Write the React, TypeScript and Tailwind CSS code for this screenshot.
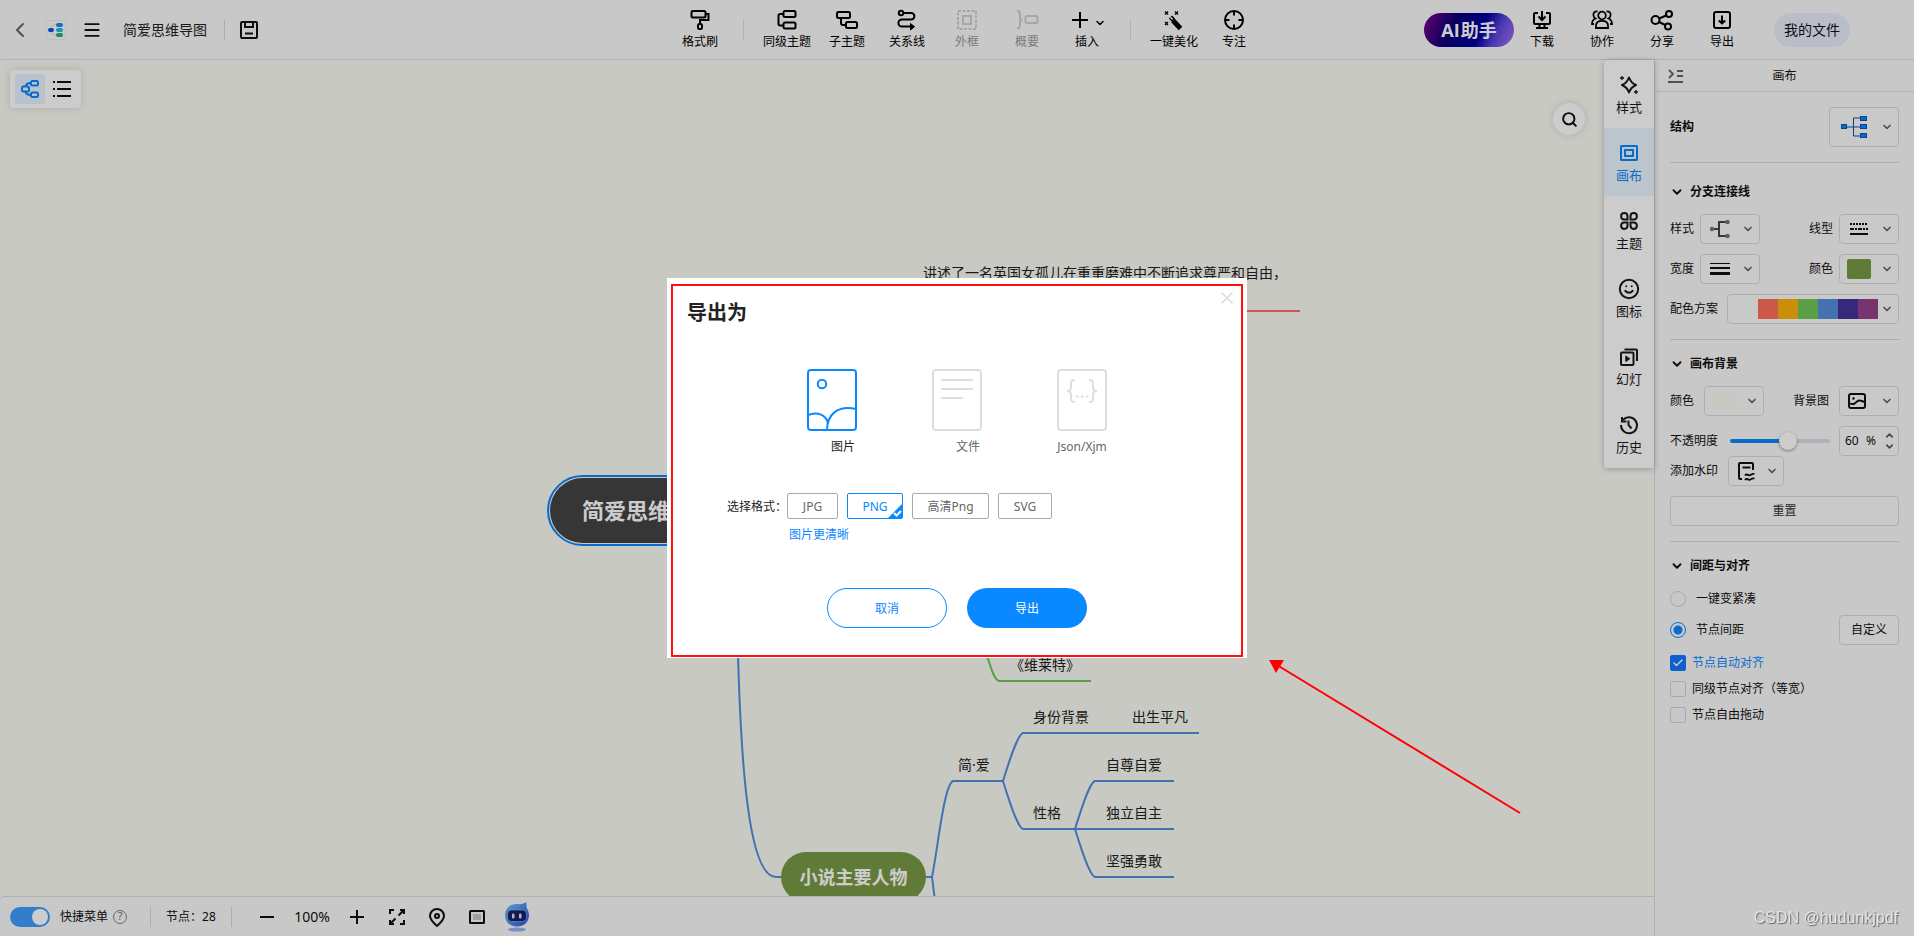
import React, { useState } from 'react';
import { Check, ChevronDown, ChevronLeft, ChevronUp, Menu, Search, Smile, X } from 'lucide-react';

type IconProps = { children: React.ReactNode; size?: number; w?: number; className?: string };

function Svg({ children, size = 20, w = 2, className }: IconProps) {
  return (
    <svg
      width={size}
      height={size}
      viewBox={`0 0 ${size} ${size}`}
      fill="none"
      stroke="currentColor"
      strokeWidth={w}
      className={className}
      overflow="visible"
      aria-hidden="true"
    >
      {children}
    </svg>
  );
}

const icons = {
  brush: (
    <Svg>
      <rect x="1.5" y="1" width="14" height="6.5" rx="1.5" />
      <path d="M15.5 4h3v6h-8.500v4" />
      <rect x="8" y="14" width="4" height="5" rx="1.5" />
    </Svg>
  ),
  sibling: (
    <Svg>
      <rect x="6.500" y="1" width="12" height="6" rx="1.5" />
      <rect x="6.500" y="12.500" width="12" height="6" rx="1.5" />
      <path d="M6.500 4H3a1.500 1.500 0 0 0-1.500 1.500V14A1.500 1.500 0 0 0 3 15.500h3.500" />
    </Svg>
  ),
  child: (
    <Svg>
      <rect x="0" y="2" width="13" height="6" rx="1.5" />
      <rect x="9" y="12" width="11" height="6" rx="1.5" />
      <path d="M4 8v5a2 2 0 0 0 2 2h3" />
    </Svg>
  ),
  relation: (
    <Svg>
      <circle cx="4" cy="3" r="2.200" />
      <path d="M6.200 3h8a3.200 3.200 0 0 1 0 6.400H5a3.600 3.600 0 0 0 0 7.200h9" />
      <path d="M13.500 13.500l4 3.200-4 3.200z" fill="currentColor" strokeWidth="1" />
    </Svg>
  ),
  frame: (
    <Svg>
      <rect x="1" y="1" width="18" height="18" strokeDasharray="3 1.5" />
      <rect x="6" y="6" width="8" height="8" />
    </Svg>
  ),
  summary: (
    <Svg>
      <path d="M0 1c2.500 0 3 1 3 3v3.500c0 1.500 1 2.200 2.500 2.200C4 9.700 3 10.500 3 12v3c0 2.500-.5 3.500-3 3.500" />
      <rect x="8.500" y="6" width="12" height="7" rx="1.5" />
    </Svg>
  ),
  wand: (
    <Svg>
      <path d="M1 1.500l3 3M4 1.500l-3 3M11 1.500l3 3M14 1.500l-3 3M1 12l3 3M4 12l-3 3" strokeWidth="1.3" />
      <path d="M6.500 7l3 3.200" strokeWidth="4.500" />
      <path d="M6.500 7.200l2 2.200" strokeWidth="1.5" stroke="#fafafa" />
      <path d="M9 10.500l7.500 8" strokeWidth="5" />
    </Svg>
  ),
  focus: (
    <Svg>
      <circle cx="10" cy="10" r="9" />
      <path d="M10 1v4.500M10 14.500V19M1 10h4.500M14.500 10H19" />
    </Svg>
  ),
  download: (
    <Svg>
      <path d="M6 3H3a1 1 0 0 0-1 1v9a1 1 0 0 0 1 1h14a1 1 0 0 0 1-1V4a1 1 0 0 0-1-1h-3" />
      <path d="M10 1v8.500M6.500 6.500L10 10l3.500-3.500M7.500 14v4M12.500 14v4M4 18h12" />
    </Svg>
  ),
  team: (
    <Svg w={1.8}>
      <circle cx="10" cy="5.500" r="3.800" />
      <path d="M4 18v-2.500C4 12 6.500 10.800 10 10.800s6 1.200 6 4.700V18z" />
      <path d="M5.500 1.500C2.500 1.200 1 3 1.500 5.500c.2 1.500 1 2.500 2 3C1 9.500 0 11 0 14h2M14.500 1.500c3-.3 4.500 1.500 4 4-.2 1.500-1 2.500-2 3 2.500 1 3.500 2.500 3.500 5.500h-2" />
    </Svg>
  ),
  share: (
    <Svg>
      <circle cx="3.500" cy="10" r="4" />
      <circle cx="17" cy="4" r="3" />
      <circle cx="16" cy="16.500" r="3" />
      <path d="M7.200 8.500l7-3M7 12l6.200 3" />
    </Svg>
  ),
  exportBox: (
    <Svg>
      <rect x="2" y="2" width="16" height="16" rx="2" />
      <path d="M10 5.500v8M6.800 10.500l3.200 3 3.200-3" />
    </Svg>
  ),
};

const topicTools = [
  { label: '同级主题', icon: icons.sibling },
  { label: '子主题', icon: icons.child },
  { label: '关系线', icon: icons.relation },
  { label: '外框', icon: icons.frame, disabled: true },
  { label: '概要', icon: icons.summary, disabled: true },
];

const fileTools = [
  { label: '下载', icon: icons.download },
  { label: '协作', icon: icons.team },
  { label: '分享', icon: icons.share },
  { label: '导出', icon: icons.exportBox },
];

const sideTabs = [
  {
    label: '样式',
    icon: (
      <Svg size={18}>
        <path d="M9 1.500c1 3 3.500 6 7 7.500-3.500 1.500-6 4.500-7 7.500-1-3-3.500-6-7-7.500 3.500-1.500 6-4.500 7-7.500z" strokeLinejoin="round" />
        <path d="M2 0v4M0 2h4M16 14v4M14 16h4" strokeWidth="1.3" />
      </Svg>
    ),
  },
  {
    label: '画布',
    icon: (
      <Svg size={18}>
        <rect x="1" y="2" width="16" height="14" rx=".5" />
        <rect x="5" y="6" width="8" height="6" />
      </Svg>
    ),
  },
  {
    label: '主题',
    icon: (
      <Svg size={18}>
        <path d="M7.500 7.500H4.200A3.200 3.200 0 1 1 7.500 4.200zM10.500 7.500h3.300a3.200 3.200 0 1 0-3.300-3.300zM7.500 10.500H4.200a3.200 3.200 0 1 0 3.300 3.300zM10.500 10.500h3.300a3.200 3.200 0 1 1-3.300 3.300z" />
      </Svg>
    ),
  },
  { label: '图标', icon: <Smile size={22} strokeWidth={2.2} className="-m-0.5" /> },
  {
    label: '幻灯',
    icon: (
      <Svg size={18}>
        <rect x="1" y="4.500" width="12.500" height="12.500" rx="1" />
        <path d="M4.500 1.500H16a1 1 0 0 1 1 1V13" />
        <path d="M5.800 8v5.500l4-2.700z" fill="currentColor" strokeWidth="1" />
      </Svg>
    ),
  },
  {
    label: '历史',
    icon: (
      <Svg size={18}>
        <path d="M3 4A8 8 0 1 1 1 9" />
        <path d="M2 1v4.500h4.500" />
        <path d="M8.500 4.500V9l3 3.500" />
      </Svg>
    ),
  },
];

const mapTexts = [
  { text: '讲述了一名英国女孤儿在重重磨难中不断追求尊严和自由，', x: 923, y: 203 },
  { text: '《维莱特》', x: 1010, y: 595 },
  { text: '身份背景', x: 1033, y: 647 },
  { text: '出生平凡', x: 1132, y: 647 },
  { text: '简·爱', x: 958, y: 695 },
  { text: '自尊自爱', x: 1106, y: 695 },
  { text: '性格', x: 1033, y: 743 },
  { text: '独立自主', x: 1106, y: 743 },
  { text: '坚强勇敢', x: 1106, y: 791 },
];

function ToolButton({ label, icon, disabled, className = 'w-[60px]' }: {
  label: string; icon: React.ReactNode; disabled?: boolean; className?: string;
}) {
  return (
    <button
      disabled={disabled}
      className={`flex flex-col items-center gap-1 text-xs leading-4 ${disabled ? 'text-[#d0d0d0]' : 'text-black'} ${className}`}
    >
      {icon}
      <span className={disabled ? 'text-[#9a9a9a]' : ''}>{label}</span>
    </button>
  );
}

function Header() {
  return (
    <header className="flex h-15 shrink-0 items-center border-b border-[#dcdcdc] bg-[#fafafa]">
      <div className="flex w-[510px] items-center pl-2">
        <button aria-label="返回" className="text-[#666]"><ChevronLeft size={24} strokeWidth={2} /></button>
        <svg width="20" height="20" viewBox="0 0 20 20" className="ml-3.5" aria-hidden="true">
          <rect x=".5" y=".5" width="19" height="19" rx="1" fill="#fcfcfc" stroke="#eee" />
          <path d="M4 10c1-4 3-5.500 6-5.500M4 10c1 4 3 5 6 5" fill="none" stroke="#ddd" />
          <rect x="2" y="8" width="6" height="4" rx="2" fill="#0a55e8" />
          <rect x="10" y="3" width="7" height="4" rx="2" fill="#0a90f0" />
          <rect x="10" y="8" width="7" height="4" rx="2" fill="#22b8e0" />
          <rect x="10" y="13" width="7" height="4" rx="2" fill="#22b080" />
        </svg>
        <button aria-label="菜单" className="ml-4"><Menu size={20} strokeWidth={2.2} /></button>
        <span className="ml-[21px] text-sm text-[#222]">简爱思维导图</span>
        <span className="ml-[17px] h-5 w-px bg-[#d8d8d8]" />
        <button aria-label="保存" className="ml-[15px]">
          <Svg size={18}>
            <rect x="1" y="1" width="16" height="16" rx="1" />
            <path d="M5 1v5h8V1M5 12.500h8" />
          </Svg>
        </button>
      </div>

      <div className="flex flex-1 items-center justify-center">
        <ToolButton label="格式刷" icon={icons.brush} />
        <span className="mx-[13px] h-5 w-px bg-[#dcdcdc]" />
        {topicTools.map((tool) => <ToolButton key={tool.label} {...tool} />)}
        <ToolButton
          label="插入"
          icon={
            <span className="flex h-5 items-center gap-1.5 pl-1">
              <Svg size={16}><path d="M8 0v16M0 8h16" /></Svg>
              <ChevronDown size={12} strokeWidth={3} className="mt-1.5" />
            </span>
          }
        />
        <span className="mx-[13px] h-5 w-px bg-[#dcdcdc]" />
        <ToolButton label="一键美化" icon={icons.wand} />
        <ToolButton label="专注" icon={icons.focus} />
      </div>

      <div className="flex items-center pr-16">
        <button className="flex h-[34px] w-[90px] items-center justify-center rounded-full bg-[linear-gradient(115deg,#80008a_0%,#0c0078_32%,#0000a0_62%,#5a48e0_78%,#b070f0_100%)] text-lg font-bold text-white">
          <span className="mr-px font-['Open_Sans',sans-serif]">AI</span>助手
        </button>
        <div className="flex gap-1">
          {fileTools.map((tool) => <ToolButton key={tool.label} {...tool} className="w-14" />)}
        </div>
        <button className="ml-6 h-[34px] w-[76px] rounded-full bg-[#e6edfb] text-sm">我的文件</button>
      </div>
    </header>
  );
}

function MindMap() {
  return (
    <div className="absolute inset-0 overflow-hidden">
      <svg width="1400" height="840" fill="none" strokeWidth="2" className="absolute top-0 left-0" aria-hidden="true">
        <path d="M1240 251h60" stroke="#ff7059" />
        <path d="M980 580l8 19c3 8 6 21 11 22h92" stroke="#71c755" />
        <g stroke="#568fdd">
          <path d="M738 595C741 700 748 817 776 817h5" />
          <path d="M926 817h6c6-30 12-92 21-96h50" />
          <path d="M932 817l5 40" />
          <path d="M1003 721c5-16 14-46 20-48h176M1003 721c5 16 14 46 20 48h151" />
          <path d="M1075 769c5-16 14-46 20-48h79M1075 769c5 16 14 46 20 48h79" />
        </g>
      </svg>
      <div className="absolute top-[415px] left-[547px] rounded-full border-2 border-[#0a88ff] p-px">
        <div className="flex h-[65px] items-center rounded-full bg-[#444] px-8 text-[22px] font-bold text-white">简爱思维导图</div>
      </div>
      <div className="absolute top-[792px] left-[781px] flex h-[50px] w-[145px] items-center justify-center rounded-full bg-[#789a46] text-lg font-bold text-white">
        小说主要人物
      </div>
      {mapTexts.map(({ text, x, y }) => (
        <span key={text} className="absolute text-sm whitespace-nowrap text-[#222]" style={{ left: x, top: y }}>{text}</span>
      ))}
    </div>
  );
}

function Canvas() {
  return (
    <main className="relative flex-1 bg-[#fbfcf4]">
      <MindMap />

      <div className="absolute top-2.5 left-2.5 flex gap-[3px] rounded bg-white px-[5px] py-1 shadow-[0_0_8px_rgba(0,0,0,0.15)]">
        <button aria-label="导图" className="flex size-[30px] items-center justify-center rounded-xs bg-[#e8f3ff] text-[#0a88ff]">
          <Svg size={18}>
            <rect x="1" y="6.500" width="7" height="5" rx="1.5" />
            <rect x="10" y="1" width="7" height="4.500" rx="1.5" />
            <rect x="10" y="12.500" width="7" height="4.500" rx="1.5" />
            <path d="M4.500 6.500C5 4 7 3 10 3M4.500 11.500c.5 2.500 2.500 3.500 5.500 3.500" />
          </Svg>
        </button>
        <button aria-label="大纲" className="flex h-[30px] w-7 items-center justify-center">
          <Svg size={18}><path d="M4 2h14M4 9h14M4 16h14M0 2h2M0 9h2M0 16h2" /></Svg>
        </button>
      </div>

      <button aria-label="搜索" className="absolute top-[43px] right-[69px] flex size-8 items-center justify-center rounded-full bg-white shadow-[0_0_8px_rgba(0,0,0,0.15)]">
        <Search size={17} strokeWidth={2.8} />
      </button>

      <nav className="absolute top-0 right-0 overflow-hidden rounded-l bg-white shadow-[0_1px_6px_rgba(0,0,0,0.25)]">
        {sideTabs.map((tab) => (
          <button
            key={tab.label}
            className={`flex h-[68px] w-[50px] flex-col items-center gap-1 pt-4 text-[13px] leading-[18px] ${tab.label === '画布' ? 'bg-[#ebf6ff] text-[#0a88ff]' : 'text-[#1a1a1a]'}`}
          >
            {tab.icon}
            {tab.label}
          </button>
        ))}
      </nav>
    </main>
  );
}

function Footer() {
  return (
    <footer className="flex h-10 shrink-0 items-center rounded-tl border-t border-[#dcdcdc] bg-[#fafafa] pl-2.5 text-xs">
      <label className="flex items-center gap-2.5">
        <span className="relative flex">
          <input type="checkbox" role="switch" defaultChecked className="peer h-5 w-10 appearance-none rounded-full bg-gray-300 checked:bg-[#409eff]" />
          <span className="absolute top-0.5 left-0.5 size-4 rounded-full bg-white peer-checked:left-[22px]" />
        </span>
        快捷菜单
      </label>
      <span className="ml-[5px] flex size-3.5 items-center justify-center rounded-full border border-[#888] text-[11px] text-[#777]">?</span>
      <span className="ml-[23px] h-5 w-px bg-[#d8d8d8]" />
      <span className="ml-[15px] w-[50px] whitespace-nowrap">节点：28</span>
      <span className="ml-[15px] h-5 w-px bg-[#d8d8d8]" />
      <button aria-label="缩小" className="ml-7"><Svg size={14}><path d="M0 7h14" /></Svg></button>
      <span className="w-[76px] text-center text-sm">100%</span>
      <button aria-label="放大"><Svg size={14}><path d="M0 7h14M7 0v14" /></Svg></button>
      <button aria-label="全屏" className="ml-6">
        <Svg size={18}>
          <path d="M6 2H2v4M12 2h4v4M6 16H2v-4M12 16h4v-4M16 2l-5.500 5.500M2 16l5.500-5.500" />
        </Svg>
      </button>
      <button aria-label="定位" className="ml-[22px]">
        <Svg size={18}>
          <path d="M9 18C4.500 14 2 11.500 2 8a7 7 0 0 1 14 0c0 3.500-2.500 6-7 10z" />
          <circle cx="9" cy="8" r="2" />
        </Svg>
      </button>
      <button aria-label="小地图" className="ml-[22px]">
        <Svg size={18}>
          <rect x="2" y="3" width="14" height="12" rx=".5" />
          <rect x="5" y="6" width="8" height="6" fill="#c8c8c8" stroke="none" />
        </Svg>
      </button>
      <button aria-label="助手" className="ml-[19px]">
        <svg width="24" height="30" viewBox="0 0 24 30" aria-hidden="true">
          <defs>
            <linearGradient id="bot" x1="0" y1="0" x2="1" y2="1">
              <stop offset="0" stopColor="#6ecbff" />
              <stop offset=".6" stopColor="#3d86f0" />
              <stop offset="1" stopColor="#3a4ee0" />
            </linearGradient>
          </defs>
          <ellipse cx="12" cy="27.500" rx="9" ry="2" fill="#7ea4e8" opacity=".8" />
          <path d="M12 2c4 .5 7-.3 9-2 .8 2 .5 4 .5 5.500C23 8 24 10.500 24 13c0 7-5 11.500-12 11.500S0 20 0 13 5 2 12 2z" fill="url(#bot)" />
          <rect x="2.500" y="8" width="19" height="11.500" rx="4" fill="#1b1f66" stroke="#9cc0ff" strokeWidth=".6" />
          <rect x="7" y="11.500" width="2.500" height="5" rx="1.200" fill="#dfe8ff" />
          <rect x="14" y="11.500" width="2.500" height="5" rx="1.200" fill="#dfe8ff" />
        </svg>
      </button>
    </footer>
  );
}

// Icon drop-down: the native select lies invisibly over the drawn value
function IconSelect({ label, options, children, className = 'w-[60px] h-[30px]' }: {
  label: string; options: string[]; children: React.ReactNode; className?: string;
}) {
  return (
    <span className={`relative flex shrink-0 items-center rounded border border-[#dadada] bg-[#fcfcfc] pr-[5px] ${className}`}>
      <span className="flex flex-1 items-center justify-center pr-[3px]">{children}</span>
      <ChevronDown size={12} strokeWidth={3.5} className="text-[#666]" />
      <select aria-label={label} className="absolute inset-0 cursor-pointer opacity-0">
        {options.map((option) => <option key={option}>{option}</option>)}
      </select>
    </span>
  );
}

function Section({ title, children, className = 'pt-3.5' }: { title: string; children: React.ReactNode; className?: string }) {
  return (
    <section className={`pb-[15px] ${className}`}>
      <h3 className="mb-3 flex h-5 items-center gap-1.5 text-xs font-bold">
        <ChevronDown size={14} strokeWidth={3.2} />
        {title}
      </h3>
      {children}
    </section>
  );
}

function CheckRow({ label, checked }: { label: string; checked?: boolean }) {
  return (
    <label className={`flex h-[26px] items-center gap-1.5 ${checked ? 'text-[#0a88ff]' : ''}`}>
      <span className="relative flex">
        <input type="checkbox" defaultChecked={checked} className="peer size-4 appearance-none rounded-xs border border-[#d4d4dc] checked:border-[#1677ff] checked:bg-[#1677ff]" />
        <Check size={12} strokeWidth={3} className="absolute top-0.5 left-0.5 hidden text-white peer-checked:block" />
      </span>
      {label}
    </label>
  );
}

const schemeColors = ['#ff7059', '#fcb30e', '#71c755', '#568fdd', '#45339a', '#97428a'];

function Panel() {
  const [opacity, setOpacity] = useState(60);

  return (
    <aside className="w-[260px] shrink-0 border-l border-[#dcdcdc] bg-[#fafafa] text-xs">
      <div className="relative flex h-8 items-center justify-center border-b border-[#dcdcdc]">
        <button aria-label="收起" className="absolute left-[13px] text-[#666]">
          <Svg size={16}><path d="M1 2l4 4-4 4M9 3h6M9 8h6M0 14h15" strokeWidth="1.8" /></Svg>
        </button>
        <h2 className="text-xs">画布</h2>
      </div>

      <div className="divide-y divide-[#dadada] px-[15px]">
        <div className="flex items-center justify-between py-[15px]">
          <span className="font-bold">结构</span>
          <IconSelect label="结构" options={['逻辑图', '思维导图', '组织结构图']} className="h-10 w-[70px] bg-[#f3f5ff]">
            <svg width="28" height="24" viewBox="0 0 28 24" fill="#0a88ff" stroke="#0a55b0" strokeWidth="1" aria-hidden="true">
              <path d="M7 12h13M20 3h-6.500v18h6.500" fill="none" />
              <rect x="1.5" y="9.500" width="5" height="4" />
              <rect x="20.500" y="1.500" width="6" height="4" />
              <rect x="20.500" y="9.500" width="6" height="4" />
              <rect x="20.500" y="18.500" width="6" height="4" />
            </svg>
          </IconSelect>
        </div>

        <Section title="分支连接线" className="pt-[19px]">
          <div className="flex flex-col gap-2.5">
            <div className="flex items-center gap-1.5">
              <span>样式</span>
              <IconSelect label="样式" options={['直角', '曲线']}>
                <svg width="20" height="20" viewBox="0 0 20 20" fill="#777" stroke="#777" strokeWidth="2" aria-hidden="true">
                  <path d="M4 10h5M16 3h-7v14h7" fill="none" stroke="#444" />
                  <circle cx="2" cy="10" r="1.300" />
                  <circle cx="17.500" cy="3" r="1.300" />
                  <circle cx="17.500" cy="17" r="1.300" />
                </svg>
              </IconSelect>
              <span className="ml-auto">线型</span>
              <IconSelect label="线型" options={['虚线', '实线']}>
                <Svg size={18}>
                  <path d="M0 4h18" strokeDasharray="2 1" />
                  <path d="M0 9h18" strokeDasharray="4 1 2 1" />
                  <path d="M0 14h18" />
                </Svg>
              </IconSelect>
            </div>
            <div className="flex items-center gap-1.5">
              <span>宽度</span>
              <IconSelect label="宽度" options={['细', '中', '粗']}>
                <Svg>
                  <path d="M0 4.500h20" strokeWidth="1" />
                  <path d="M0 9h20" />
                  <path d="M0 14.500h20" strokeWidth="3" />
                </Svg>
              </IconSelect>
              <span className="ml-auto">颜色</span>
              <IconSelect label="颜色" options={['绿色']}>
                <span className="h-5 w-6 rounded-xs bg-[#789a46]" />
              </IconSelect>
            </div>
            <div className="flex items-center gap-[9px]">
              <span>配色方案</span>
              <IconSelect label="配色方案" options={['彩虹']} className="h-[30px] flex-1">
                <span className="ml-auto flex">
                  {schemeColors.map((color) => (
                    <span key={color} className="h-5 w-5" style={{ backgroundColor: color }} />
                  ))}
                </span>
              </IconSelect>
            </div>
          </div>
        </Section>

        <Section title="画布背景">
          <div className="flex items-center gap-2.5">
            <span>颜色</span>
            <IconSelect label="背景颜色" options={['米白']}>
              <span className="h-5 w-6 rounded-xs bg-[#fbfcf4]" />
            </IconSelect>
            <span className="ml-auto">背景图</span>
            <IconSelect label="背景图" options={['无', '纸张']}>
              <Svg size={18} className="mr-1">
                <rect x="1" y="2" width="16" height="14" rx="2" />
                <path d="M1 11.500c2.500 0 3.500 1 5 .500C8 11 8.500 9 11 8.500c2.500-.3 4 1.500 6 1.500" />
                <circle cx="5.500" cy="6.500" r="1.200" fill="currentColor" stroke="none" />
              </Svg>
            </IconSelect>
          </div>
          <div className="mt-2.5 flex items-center gap-3">
            <label htmlFor="opacity" className="shrink-0">不透明度</label>
            <input
              id="opacity"
              type="range"
              value={opacity}
              onChange={(e) => setOpacity(Number(e.target.value))}
              className="h-1 w-[100px] min-w-0 appearance-none rounded-full [&::-webkit-slider-thumb]:size-[18px] [&::-webkit-slider-thumb]:appearance-none [&::-webkit-slider-thumb]:rounded-full [&::-webkit-slider-thumb]:bg-white [&::-webkit-slider-thumb]:shadow-[0_1px_3px_rgba(0,0,0,0.4)]"
              style={{ background: `linear-gradient(to right, #0a88ff ${opacity}%, #dcdce6 ${opacity}%)` }}
            />
            <span className="-ml-3 flex-1" />
            <span className="-ml-3 flex h-[30px] w-[60px] shrink-0 items-center rounded border border-[#dadada] bg-[#fcfcfc] pl-[5px]">
              <input aria-label="不透明度数值" value={opacity} onChange={(e) => setOpacity(Number(e.target.value))} className="w-[21px]" />
              %
              <span className="ml-auto flex flex-col pr-[3px] text-[#555]">
                <ChevronUp size={11} strokeWidth={3.5} />
                <ChevronDown size={11} strokeWidth={3.5} />
              </span>
            </span>
          </div>
          <div className="flex items-center gap-2.5">
            <span>添加水印</span>
            <IconSelect label="添加水印" options={['无', '文字水印']} className="h-[30px] w-14">
              <Svg size={18}>
                <path d="M5 17H3a1 1 0 0 1-1-1V2a1 1 0 0 1 1-1h12a1 1 0 0 1 1 1v6M5.500 5.500h8" />
                <path d="M8 13.500c2-3 3.500 1 5.500-.5 1.500-1 2-1.500 4-1M8 18c2-3 3.500 1 5.500-.5 1.500-1 2-1.500 4-1" strokeWidth="1.8" />
              </Svg>
            </IconSelect>
          </div>
          <button className="mt-2.5 h-[30px] w-full rounded border border-[#dadada] bg-[#fcfcfc] text-[#333]">重置</button>
        </Section>

        <Section title="间距与对齐">
          <div className="flex flex-col gap-[5px]">
            <label className="flex h-[22px] items-center gap-2.5">
              <input type="radio" name="spacing" className="size-4 appearance-none rounded-full border border-[#d4d4d4]" />
              一键变紧凑
            </label>
            <div className="flex items-center justify-between">
              <label className="flex items-center gap-2.5">
                <input
                  type="radio"
                  name="spacing"
                  defaultChecked
                  className="size-4 appearance-none rounded-full border border-[#0a88ff] checked:bg-[radial-gradient(circle,#0a88ff_4px,transparent_5px)]"
                />
                节点间距
              </label>
              <button className="h-[30px] w-[60px] rounded border border-[#dadada] bg-[#fcfcfc]">自定义</button>
            </div>
            <div>
              <CheckRow label="节点自动对齐" checked />
              <CheckRow label="同级节点对齐（等宽）" />
              <CheckRow label="节点自由拖动" />
            </div>
          </div>
        </Section>
      </div>
    </aside>
  );
}

const exportTypes = [
  {
    label: '图片',
    radio: true,
    art: (
      <>
        <circle cx="15" cy="15" r="4.200" />
        <path d="M1 46c9-4 19 0 20 9M20 61c0-15 10-25 29-21" />
      </>
    ),
  },
  { label: '文件', radio: true, art: <path d="M9 11h32M9 20h32M9 29h22" /> },
  {
    label: 'Json/Xjm',
    radio: false,
    art: (
      <>
        <path d="M18 11c-3 0-4 1-4 3v4c0 2-1 4-4 4 3 0 4 2 4 4v4c0 2 1 3 4 3M32 11c3 0 4 1 4 3v4c0 2 1 4 4 4-3 0-4 2-4 4v4c0 2-1 3-4 3" />
        <path d="M19 27.500h2.500M24 27.500h2.500M29 27.500h2.500" />
      </>
    ),
  },
];

const formats = [
  { name: 'JPG', width: 'w-[51px]' },
  { name: 'PNG', width: 'w-14' },
  { name: '高清Png', width: 'w-[77px]' },
  { name: 'SVG', width: 'w-[54px]' },
];

function ExportDialog() {
  const [type, setType] = useState('图片');
  const [format, setFormat] = useState('PNG');

  return (
    <div className="fixed inset-0 flex items-center justify-center bg-black/20">
      <div role="dialog" aria-label="导出为" className="relative w-[580px] bg-white pt-5 pb-[30px] text-xs">
        <h1 className="px-5 text-xl leading-[30px] font-bold text-[#222]">导出为</h1>
        <button aria-label="关闭" className="absolute top-2.5 right-2.5 text-[#dcdcdc]"><X size={20} strokeWidth={2} /></button>

        <div className="mt-[41px] flex justify-center gap-[75px]">
          {exportTypes.map(({ label, radio, art }) => (
            <label key={label} className={`flex w-[50px] flex-col items-center ${type === label ? 'text-[#0a88ff]' : 'text-[#dedede]'}`}>
              <svg width="50" height="62" fill="none" stroke="currentColor" strokeWidth="2" aria-hidden="true">
                <rect x="1" y="1" width="48" height="60" rx="3" />
                {art}
              </svg>
              <span className={`mt-1.5 flex h-5 items-center ${type === label ? 'text-[#222]' : 'text-[#666]'}`}>
                <input
                  type="radio"
                  name="export-type"
                  checked={type === label}
                  onChange={() => setType(label)}
                  className={radio ? 'w-[22px] appearance-none' : 'w-0 appearance-none'}
                />
                {label}
              </span>
            </label>
          ))}
        </div>

        <div className="mt-9 flex items-center pl-15">
          <span className="w-15 pt-0.5 text-[#222]">选择格式：</span>
          <div className="flex gap-[9px]">
            {formats.map(({ name, width }) => (
              <button
                key={name}
                onClick={() => setFormat(name)}
                className={`relative h-[26px] rounded-xs border pt-0.5 ${width} ${format === name ? 'border-[#0a88ff] text-[#0a88ff]' : 'border-[#aaa] text-[#666]'}`}
              >
                {name}
                {format === name && (
                  <svg width="14" height="14" className="absolute right-0 bottom-0" aria-hidden="true">
                    <path d="M14 0v14H0z" fill="#0a88ff" />
                    <path d="M6 9l2.500 2.500L13 7" fill="none" stroke="#fff" strokeWidth="2" />
                  </svg>
                )}
              </button>
            ))}
          </div>
        </div>
        <p className="mt-1.5 pl-[122px] leading-5 text-[#0a88ff]">图片更清晰</p>

        <div className="mt-[43px] flex justify-center gap-5">
          <button className="h-10 w-[120px] rounded-full border border-[#0a88ff] pt-0.5 text-[#0a88ff]">取消</button>
          <button className="h-10 w-[120px] rounded-full bg-[#0a88ff] pt-0.5 text-white">导出</button>
        </div>

        <div className="pointer-events-none absolute top-1.5 right-1 bottom-px left-1 border-2 border-[#ff1010]" />
        <svg width="252" height="156" className="pointer-events-none absolute top-[382px] left-[602px]" aria-hidden="true">
          <path d="M8 5l243 148" stroke="#ff0000" strokeWidth="2" />
          <path d="M0 0h15L7 13z" fill="#ff0000" />
        </svg>
      </div>
    </div>
  );
}

export default function App() {
  return (
    <div className="flex h-screen flex-col overflow-hidden font-['Noto_Sans','Noto_Sans_CJK_SC',sans-serif] text-[#111]">
      <Header />
      <div className="flex min-h-0 flex-1">
        <div className="flex min-w-0 flex-1 flex-col">
          <Canvas />
          <Footer />
        </div>
        <Panel />
      </div>
      <ExportDialog />
      <span className="fixed right-4 bottom-1.5 font-['Liberation_Sans',sans-serif] text-base text-[#e4e4e4] [text-shadow:1px_1px_1px_#666]">
        CSDN @hudunkjpdf
      </span>
    </div>
  );
}
